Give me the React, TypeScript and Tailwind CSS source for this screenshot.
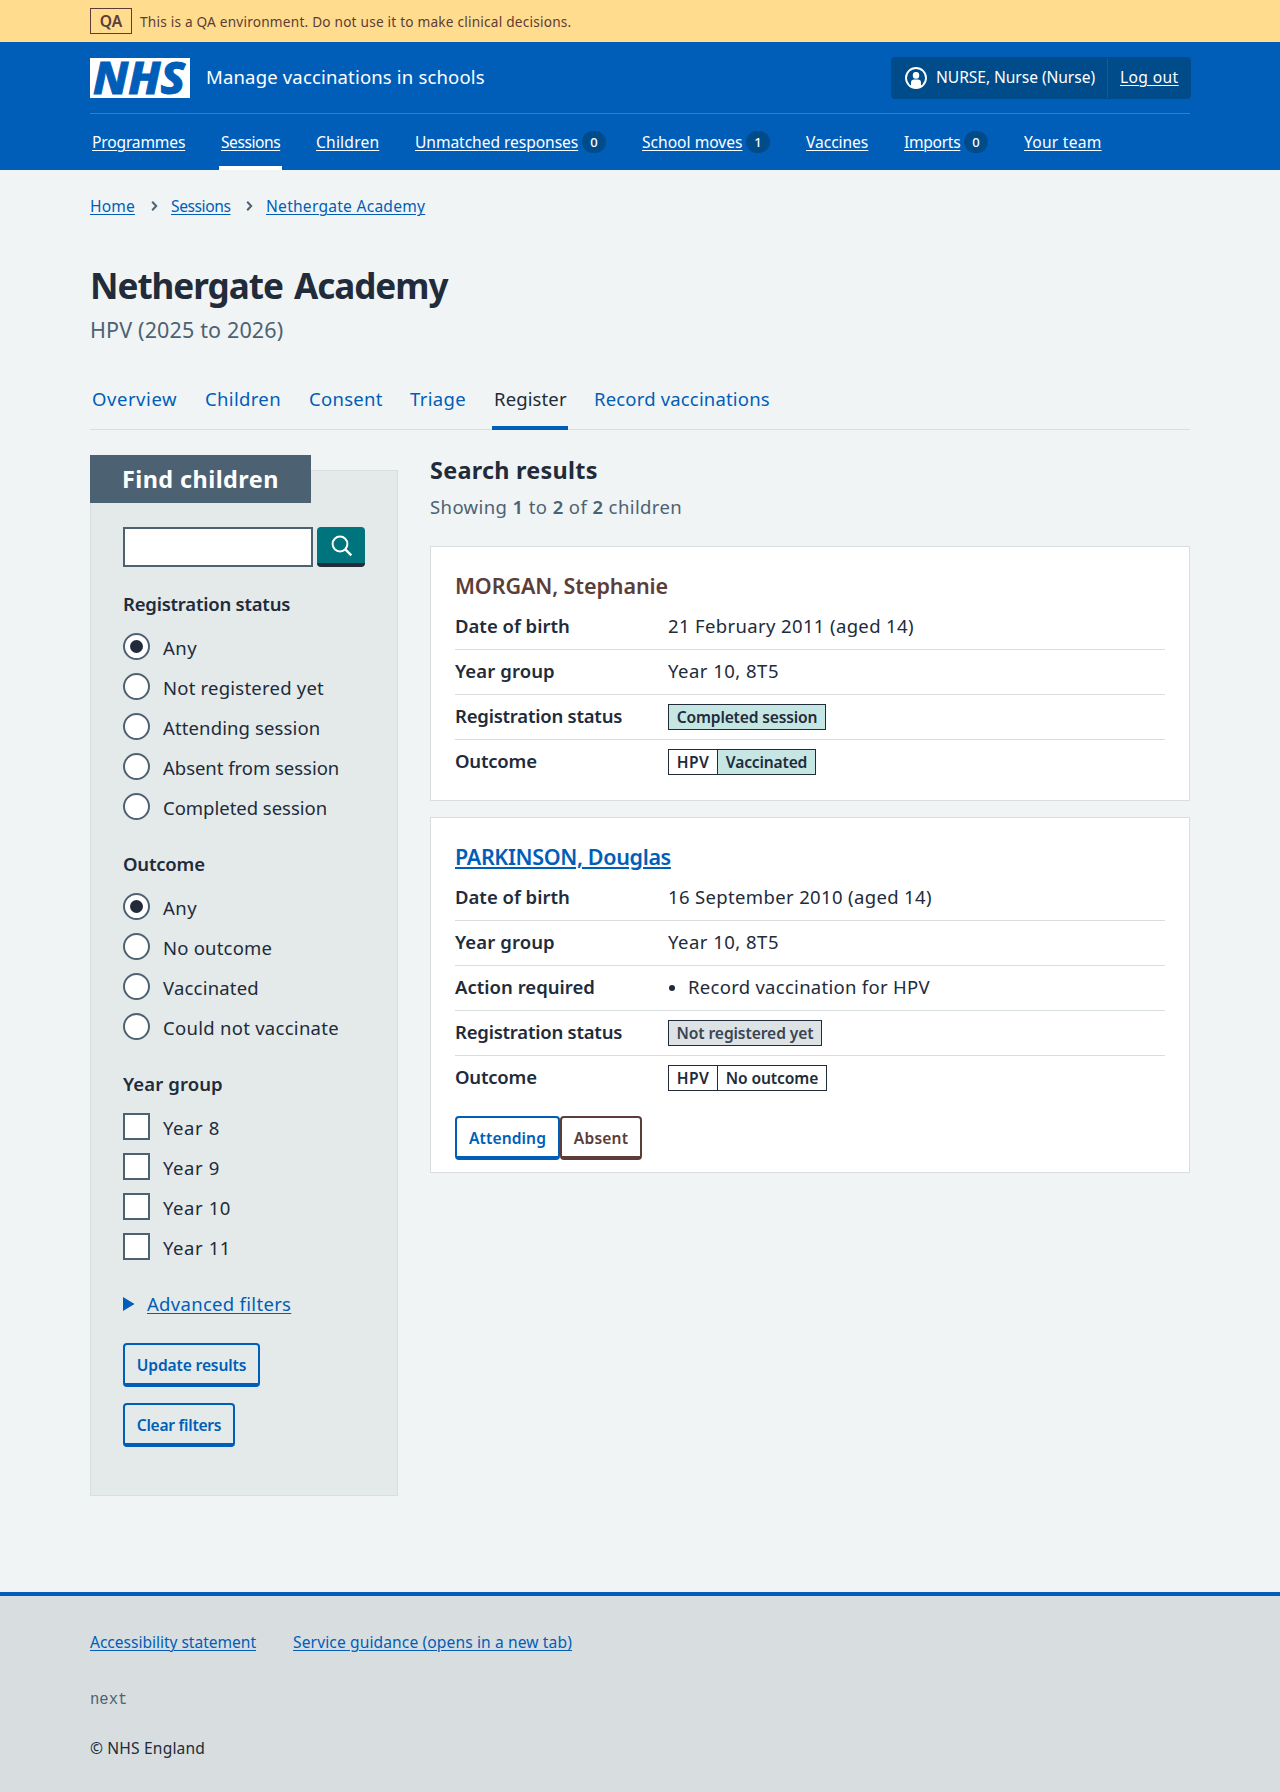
import type { ReactNode } from "react";

const link = "underline decoration-1 underline-offset-[2px]";

function Logo() {
  return (
    <svg width="100" height="40" viewBox="0 0 100 40" role="img" aria-label="NHS" className="shrink-0 overflow-visible">
      <rect width="100" height="40" fill="#fff" />
      <text
        x="3"
        y="36.4"
        textLength="92"
        lengthAdjust="spacingAndGlyphs"
        fontFamily="'Noto Sans', sans-serif"
        fontWeight="800"
        fontStyle="italic"
        fontSize="45"
        fill="#005eb8"
        stroke="#005eb8"
        strokeWidth="1"
      >
        NHS
      </text>
    </svg>
  );
}

function UserIcon() {
  return (
    <svg width="22" height="22" viewBox="0 0 22 22" className="shrink-0">
      <clipPath id="user-ring">
        <circle cx="11" cy="11" r="10" />
      </clipPath>
      <circle cx="11" cy="11" r="10" fill="none" stroke="#fff" strokeWidth="1.9" />
      <rect x="7.8" y="4.9" width="6.4" height="6.8" rx="2.9" fill="#fff" />
      <path d="M6 22v-6.2a3.2 3.2 0 0 1 3.2-3.2h3.6a3.2 3.2 0 0 1 3.2 3.2V22z" fill="#fff" clipPath="url(#user-ring)" />
    </svg>
  );
}

function Chevron() {
  return (
    <svg width="7" height="12" viewBox="0 0 7 12" className="shrink-0">
      <path d="M1.2 1.8 5.2 6l-4 4.2" fill="none" stroke="#4c6272" strokeWidth="2" />
    </svg>
  );
}

type NavEntry = { label: string; tracking: string; gap: string; count?: number; active?: boolean };

const nav: NavEntry[] = [
  { label: "Programmes", tracking: "tracking-[-0.17px] w-[97px]", gap: "" },
  { label: "Sessions", tracking: "tracking-[-0.46px] w-[63px]", gap: "ml-[32px]", active: true },
  { label: "Children", tracking: "tracking-[0.2px] w-[67px]", gap: "ml-[32px]" },
  { label: "Unmatched responses", tracking: "tracking-[-0.06px] w-[167px]", gap: "ml-[32px]", count: 0 },
  { label: "School moves", tracking: "tracking-[0px] w-[104px]", gap: "ml-[34px]", count: 1 },
  { label: "Vaccines", tracking: "tracking-[-0.05px] w-[66px]", gap: "ml-[34px]" },
  { label: "Imports", tracking: "tracking-[-0.3px] w-[60px]", gap: "ml-[32px]", count: 0 },
  { label: "Your team", tracking: "tracking-[0.25px] w-[81px]", gap: "ml-[34px]" },
];

const tabs = [
  { label: "Overview", cls: "tracking-[0.55px] w-[89px]" },
  { label: "Children", cls: "tracking-[0.34px] w-[79px] ml-[24px]" },
  { label: "Consent", cls: "tracking-[0.28px] w-[77px] ml-[25px]" },
  { label: "Triage", cls: "tracking-[0.32px] w-[60px] ml-[24px]" },
  { label: "Register", cls: "tracking-[0.12px] w-[76px] ml-[24px]", active: true },
  { label: "Record vaccinations", cls: "tracking-[0.17px] w-[179px] ml-[24px]" },
];

const registration = [
  { label: "Any", tracking: "tracking-[0.5px]", checked: true },
  { label: "Not registered yet", tracking: "tracking-[0.22px]" },
  { label: "Attending session", tracking: "tracking-[0.12px]" },
  { label: "Absent from session", tracking: "tracking-[-0.03px]" },
  { label: "Completed session", tracking: "tracking-[-0.02px]" },
];

const outcomes = [
  { label: "Any", tracking: "tracking-[0.5px]", checked: true },
  { label: "No outcome", tracking: "tracking-[0.2px]" },
  { label: "Vaccinated", tracking: "tracking-[0.2px]" },
  { label: "Could not vaccinate", tracking: "tracking-[0.28px]" },
];

const years = ["Year 8", "Year 9", "Year 10", "Year 11"];

function Radio({ label, tracking, checked }: { label: string; tracking: string; checked?: boolean }) {
  return (
    <label className="flex h-10 items-center">
      <span className="mb-px flex size-[27px] shrink-0 items-center justify-center rounded-full border-2 border-[#4c6272] bg-white">
        {checked && <span className="size-[13px] rounded-full bg-[#212b3a]" />}
      </span>
      <span className={`ml-[13px] pt-px ${tracking}`}>{label}</span>
    </label>
  );
}

function Checkbox({ label }: { label: string }) {
  return (
    <label className="flex h-10 items-center">
      <span className="mb-px size-[27px] shrink-0 border-2 border-[#4c6272] bg-white" />
      <span className="ml-[13px] pt-[2px] tracking-[0.57px]">{label}</span>
    </label>
  );
}

function Legend({ children, className }: { children: ReactNode; className: string }) {
  return <div className={`mt-[23px] mb-[9px] leading-7 font-semibold ${className}`}>{children}</div>;
}

function Button({ children, className }: { children: ReactNode; className: string }) {
  return (
    <button
      className={`flex h-[44px] items-center justify-center rounded-[4px] border-2 border-b-4 border-current pt-[4px] text-[15.6px] font-semibold ${className}`}
    >
      {children}
    </button>
  );
}

function Row({ label, tracking, children, last }: { label: string; tracking: string; children: ReactNode; last?: boolean }) {
  return (
    <div className={`flex h-[45px] items-center border-b ${last ? "border-transparent" : "border-[#d8dde0]"}`}>
      <dt className={`w-[213px] pb-[2px] font-semibold ${tracking}`}>{label}</dt>
      <dd className="flex items-center">{children}</dd>
    </div>
  );
}

function Tag({ children, className }: { children: ReactNode; className: string }) {
  return (
    <strong
      className={`flex h-[26px] items-center justify-center border border-[#212b3a] pt-px text-[15.6px] font-semibold ${className}`}
    >
      {children}
    </strong>
  );
}

export default function App() {
  return (
    <div className="flex min-h-[1792px] flex-col bg-[#f0f4f5] font-['Noto_Sans',sans-serif] text-[18.5px] text-[#212b3a]">
      <div className="h-[42px] bg-[#ffdc8e] text-[#5c3d38]">
        <div className="mx-auto flex h-full w-[1100px] items-center">
          <strong className="flex h-[26px] w-[42px] items-center justify-center border border-[#5c3d38] pt-[2px] text-[15.6px] font-semibold">
            QA
          </strong>
          <span className="ml-[8px] pt-[3px] text-[13.65px] tracking-[0.21px]">
            This is a QA environment. Do not use it to make clinical decisions.
          </span>
        </div>
      </div>

      <header className="h-[128px] bg-[#005eb8] text-white">
        <div className="mx-auto w-[1100px]">
          <div className="flex h-[72px] items-center border-b border-[#337ec6]">
            <Logo />
            <span className="ml-[16px] pb-px tracking-[0.17px]">Manage vaccinations in schools</span>
            <div className="-mr-px ml-auto flex h-[42px] items-center rounded-[4px] bg-[#004b89] text-[15.6px]">
              <div className="flex h-[40px] w-[217px] items-center border-r border-[#005eb8] pl-[14px]">
                <UserIcon />
                <span className="ml-[9px] pt-px whitespace-nowrap tracking-[-0.06px]">NURSE, Nurse (Nurse)</span>
              </div>
              <a className={`w-[83px] pt-px pl-[12px] tracking-[0.38px] ${link}`}>Log out</a>
            </div>
          </div>
          <nav className="flex h-[56px] text-[15.6px]">
            {nav.map((n) => (
              <div key={n.label} className={`flex items-center ${n.gap}`}>
                <a
                  className={`flex h-full items-center border-y-4 border-t-transparent pt-[2px] pl-[2px] whitespace-nowrap ${n.active ? "border-b-white" : "border-b-transparent"} ${n.tracking}`}
                >
                  <span className={link}>{n.label}</span>
                </a>
                {n.count !== undefined && (
                  <span className="ml-[2px] flex h-[22px] w-[24px] items-center justify-center rounded-full bg-[#004b89] pt-px text-[13px] font-medium">
                    {n.count}
                  </span>
                )}
              </div>
            ))}
          </nav>
        </div>
      </header>

      <main className="mx-auto w-[1100px]">
        <nav className="mt-[24px] flex h-6 items-center text-[15.6px] text-[#005eb8]">
          <a className="w-[61px] pt-[2px] tracking-[0.15px]"><span className={link}>Home</span></a>
          <Chevron />
          <a className="ml-[13px] w-[75px] pt-[2px] tracking-[-0.42px]"><span className={link}>Sessions</span></a>
          <Chevron />
          <a className={`ml-[13px] pt-[2px] tracking-[0.24px] ${link}`}>Nethergate Academy</a>
        </nav>

        <h1 className="mt-[45px] text-[35.1px] leading-[45px] font-bold tracking-[-1.03px] [word-spacing:3px]">Nethergate Academy</h1>
        <p className="mt-[6px] text-[21.5px] leading-8 tracking-[0.15px] text-[#4c6272]">HPV (2025 to 2026)</p>

        <nav className="mt-[22px] flex h-[62px] border-b border-[#d8dde0] text-[#005eb8]">
          {tabs.map((t) => (
            <a
              key={t.label}
              className={`-mb-px flex h-[62px] items-center border-y-4 border-t-transparent pl-[2px] whitespace-nowrap ${t.active ? "border-b-[#005eb8] text-[#212b3a]" : "border-b-transparent"} ${t.cls}`}
            >
              {t.label}
            </a>
          ))}
        </nav>

        <div className="mt-[25px] flex items-start gap-[32px]">
          <aside className="mt-[15px] h-[1026px] w-[308px] border border-[#d8dde0] bg-[#e4eaea] pl-[32px]">
            <h2 className="-mt-[16px] -ml-[33px] h-[48px] w-[221px] bg-[#4c6272] pl-[32px] text-[23.4px] leading-[48px] font-bold tracking-[0.44px] text-white">
              Find children
            </h2>
            <div className="mt-[24px] flex gap-[4px]">
              <input className="h-[40px] w-[190px] border-2 border-[#4c6272] bg-white" />
              <button className="flex h-[40px] w-[48px] items-center justify-center rounded-[4px] border-b-4 border-[#212b3a] bg-[#00747c]">
                <svg width="24" height="24" viewBox="0 0 24 24" fill="none" stroke="#fff" strokeWidth="2">
                  <circle cx="11" cy="11" r="7.4" />
                  <path d="m16.3 16.3 6 6" strokeWidth="2.4" />
                </svg>
              </button>
            </div>

            <Legend className="tracking-[-0.22px]">Registration status</Legend>
            {registration.map((r) => <Radio key={r.label} {...r} />)}
            <Legend className="tracking-[-0.2px]">Outcome</Legend>
            {outcomes.map((r) => <Radio key={r.label} {...r} />)}
            <Legend className="tracking-[0.1px]">Year group</Legend>
            {years.map((y) => <Checkbox key={y} label={y} />)}

            <div className="mt-[23px] flex h-7 items-center text-[#005eb8]">
              <svg width="12" height="14" viewBox="0 0 12 14">
                <path d="M0 0v14l11.5-7z" fill="#005eb8" />
              </svg>
              <span className={`ml-[12px] tracking-[0.3px] ${link}`}>Advanced filters</span>
            </div>
            <Button className="mt-[25px] w-[137px] tracking-[-0.14px] text-[#005eb8]">Update results</Button>
            <Button className="mt-[16px] w-[112px] tracking-[-0.27px] text-[#005eb8]">Clear filters</Button>
          </aside>

          <section className="w-[760px]">
            <h2 className="text-[23.4px] leading-[30px] font-bold tracking-[0.27px]">Search results</h2>
            <p className="mt-[8px] leading-7 tracking-[0.4px] text-[#4c6272]">
              Showing <b className="font-semibold">1</b> to <b className="font-semibold">2</b> of{" "}
              <b className="font-semibold">2</b> children
            </p>

            <article className="mt-[25px] h-[255px] border border-[#d8dde0] bg-white px-[24px] pt-[23px]">
              <h3 className="text-[21.5px] leading-8 font-semibold tracking-[-0.1px] text-[#5c3d38]">MORGAN, Stephanie</h3>
              <dl className="mt-[3px]">
                <Row label="Date of birth" tracking="tracking-[0px]">
                  <span className="pb-[2px] tracking-[0.36px]">21 February 2011 (aged 14)</span>
                </Row>
                <Row label="Year group" tracking="tracking-[0.1px]">
                  <span className="pb-[2px] tracking-[0.48px]">Year 10, 8T5</span>
                </Row>
                <Row label="Registration status" tracking="tracking-[-0.22px]">
                  <Tag className="w-[158px] bg-[#c6e6e3] tracking-[-0.16px]">Completed session</Tag>
                </Row>
                <Row label="Outcome" tracking="tracking-[-0.2px]" last>
                  <Tag className="w-[50px] tracking-[0.4px]">HPV</Tag>
                  <Tag className="-ml-px w-[99px] bg-[#c6e6e3] tracking-[-0.16px]">Vaccinated</Tag>
                </Row>
              </dl>
            </article>

            <article className="mt-[16px] h-[356px] border border-[#d8dde0] bg-white px-[24px] pt-[23px]">
              <h3 className="text-[21.5px] leading-8 font-semibold tracking-[-0.35px] text-[#005eb8] underline decoration-2 underline-offset-[2px]">
                PARKINSON, Douglas
              </h3>
              <dl className="mt-[3px]">
                <Row label="Date of birth" tracking="tracking-[0px]">
                  <span className="pb-[2px] tracking-[0.35px]">16 September 2010 (aged 14)</span>
                </Row>
                <Row label="Year group" tracking="tracking-[0.1px]">
                  <span className="pb-[2px] tracking-[0.48px]">Year 10, 8T5</span>
                </Row>
                <Row label="Action required" tracking="tracking-[0.02px]">
                  <span className="ml-px size-[6px] rounded-full bg-[#212b3a]" />
                  <span className="ml-[13px] pb-[2px] tracking-[0.28px]">Record vaccination for HPV</span>
                </Row>
                <Row label="Registration status" tracking="tracking-[-0.22px]">
                  <Tag className="w-[154px] bg-[#dde2e5] tracking-[-0.09px] text-[#384552]">Not registered yet</Tag>
                </Row>
                <Row label="Outcome" tracking="tracking-[-0.2px]" last>
                  <Tag className="w-[50px] tracking-[0.4px]">HPV</Tag>
                  <Tag className="-ml-px w-[110px] tracking-[-0.1px]">No outcome</Tag>
                </Row>
              </dl>
              <div className="mt-[15px] flex">
                <Button className="w-[105px] tracking-[0.1px] text-[#005eb8]">Attending</Button>
                <Button className="w-[82px] tracking-[0.2px] text-[#5c3d38]">Absent</Button>
              </div>
            </article>
          </section>
        </div>
      </main>

      <footer className="mt-[96px] h-[200px] border-t-4 border-[#005eb8] bg-[#d8dde0]">
        <div className="mx-auto w-[1100px] pt-[34px] text-[15.6px] leading-6">
          <div className="flex text-[#005eb8]">
            <a className="w-[203px] tracking-[-0.04px]"><span className={link}>Accessibility statement</span></a>
            <a className={`tracking-[0.11px] ${link}`}>Service guidance (opens in a new tab)</a>
          </div>
          <p className="mt-[34px] font-['Liberation_Mono',monospace] text-[15.6px] text-[#4c6272]">next</p>
          <p className="mt-[24px] tracking-[0.16px]">© NHS England</p>
        </div>
      </footer>
    </div>
  );
}
